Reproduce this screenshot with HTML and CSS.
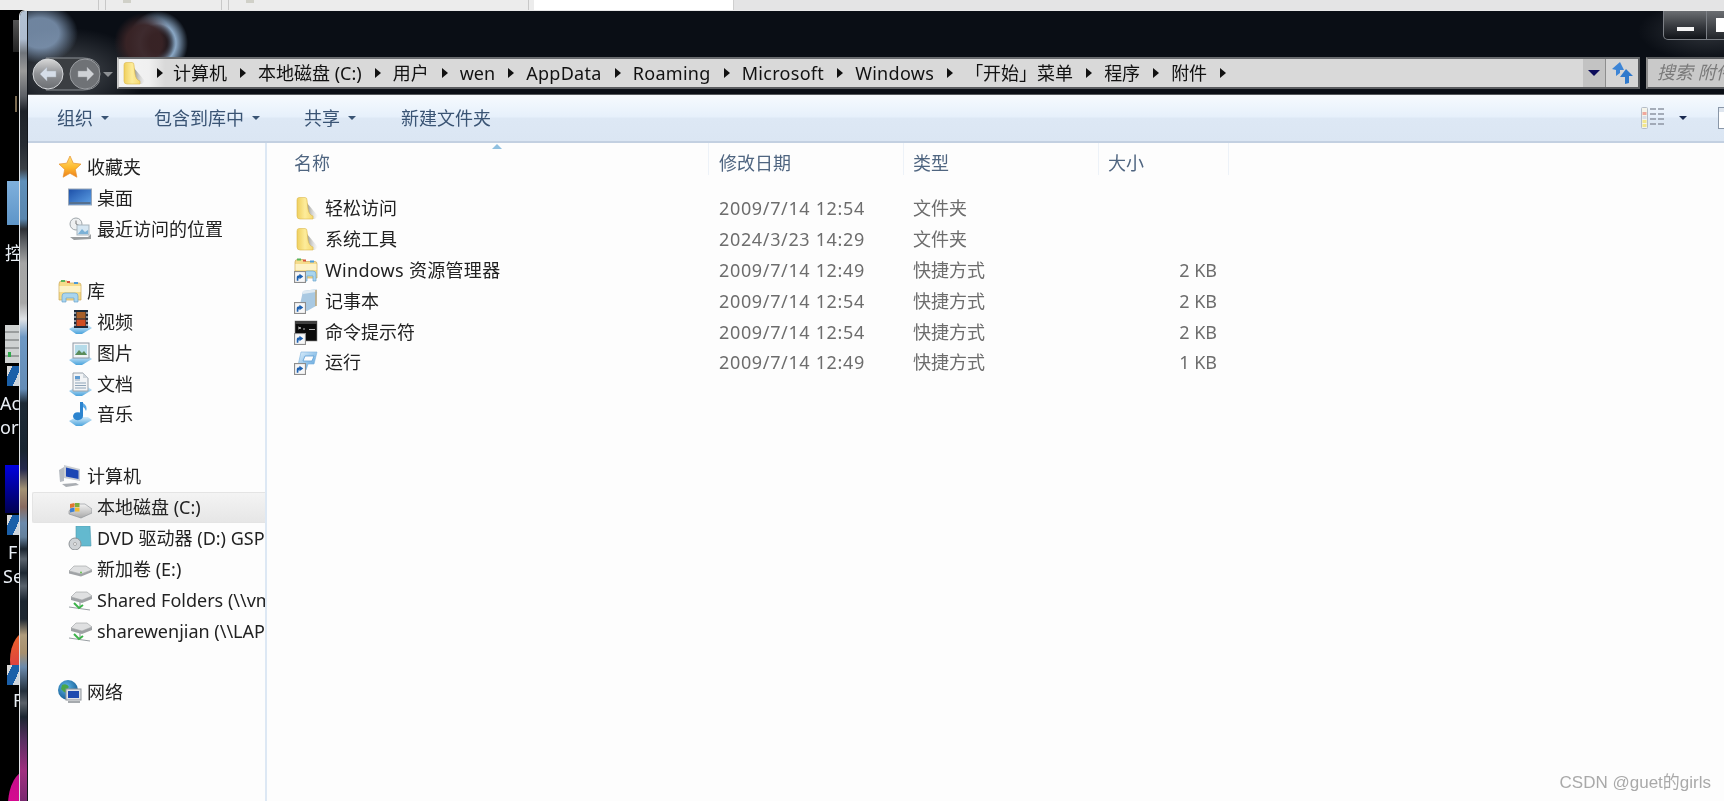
FILE: index.html
```html
<!DOCTYPE html>
<html lang="zh-CN">
<head>
<meta charset="utf-8">
<title>附件</title>
<link rel="stylesheet" href="styles.css">
</head>
<body>
<svg class="defs" width="0" height="0" aria-hidden="true">
  <defs>
    <linearGradient id="gFolder" x1="0" y1="0" x2="1" y2="0"><stop offset="0" stop-color="#efcf5e"/><stop offset=".5" stop-color="#fdec9a"/><stop offset="1" stop-color="#f6d970"/></linearGradient>
    <linearGradient id="gShadow" x1="0" y1="0" x2="1" y2="0"><stop offset="0" stop-color="#77776c" stop-opacity=".85"/><stop offset="1" stop-color="#bbb" stop-opacity="0"/></linearGradient>
    <linearGradient id="gStar" x1="0" y1="0" x2="0" y2="1"><stop offset="0" stop-color="#ffe27a"/><stop offset=".55" stop-color="#fdb92e"/><stop offset="1" stop-color="#ee7f1c"/></linearGradient>
    <linearGradient id="gDesk" x1="0" y1="0" x2="1" y2="1"><stop offset="0" stop-color="#1c4fa8"/><stop offset="1" stop-color="#5fa2e6"/></linearGradient>
    <linearGradient id="gBase" x1="0" y1="0" x2="0" y2="1"><stop offset="0" stop-color="#d4ebfa"/><stop offset="1" stop-color="#4aa3dc"/></linearGradient>
    <linearGradient id="gDrive" x1="0" y1="0" x2="0" y2="1"><stop offset="0" stop-color="#f2f2f2"/><stop offset="1" stop-color="#a9a9a9"/></linearGradient>
    <linearGradient id="gRun" x1="0" y1="0" x2="1" y2="1"><stop offset="0" stop-color="#e4f3fd"/><stop offset="1" stop-color="#4d9ad8"/></linearGradient>
    <linearGradient id="gNavBtn" x1="0" y1="0" x2="0" y2="1"><stop offset="0" stop-color="#d8d8d8"/><stop offset=".5" stop-color="#8e9094"/><stop offset="1" stop-color="#6c6f73"/></linearGradient>
    <radialGradient id="gGlobe" cx=".4" cy=".35" r=".7"><stop offset="0" stop-color="#5fb8ea"/><stop offset="1" stop-color="#11578f"/></radialGradient>

    <symbol id="i-folder" viewBox="0 0 24 24">
      <path d="M13 7 L24 20 L21 23 L12 23Z" fill="url(#gShadow)"/>
      <path d="M3 4 Q3 1.5 5 1.5 L11 1.5 Q13 1.5 13 4 L14 13 Q15 19 19 20 L19 23 L6 23 Q3 23 3 20Z" fill="url(#gFolder)" stroke="#dcb94f" stroke-width=".6"/>
    </symbol>
    <symbol id="i-star" viewBox="0 0 24 24">
      <path d="M12 1 L15.3 8.2 L23 9.1 L17.3 14.4 L18.9 22.2 L12 18.3 L5.1 22.2 L6.7 14.4 L1 9.1 L8.7 8.2Z" fill="url(#gStar)" stroke="#e6902c" stroke-width=".7"/>
    </symbol>
    <symbol id="i-desktop" viewBox="0 0 24 24">
      <rect x="0.5" y="3" width="23" height="16" fill="url(#gDesk)" stroke="#9aa7b8"/>
      <rect x="1.5" y="16" width="21" height="2" fill="#55708f"/>
    </symbol>
    <symbol id="i-recent" viewBox="0 0 24 24">
      <circle cx="8" cy="7" r="6" fill="#eef0f1" stroke="#9ea5aa"/>
      <path d="M8 3.5V7L11 8.5" fill="none" stroke="#777" stroke-width="1"/>
      <rect x="9" y="8" width="12" height="10" fill="#d5e6f2" stroke="#a7b3bc"/>
      <path d="M10 17 L14 12 L17 15 L20 13 V17Z" fill="#7cb1d6"/>
      <path d="M2 20 L20 20 L23 17 L23 22 L6 23Z" fill="#9a9d9f"/>
    </symbol>
    <symbol id="i-library" viewBox="0 0 24 24">
      <path d="M1 5 Q1 2 3.500 2 H9 L11 4 H21 Q23 4 23 6 V21 H1Z" fill="#f6dc8b" stroke="#c9a85a" stroke-width=".7"/>
      <rect x="3" y="1" width="4" height="2" fill="#5bb45b"/><rect x="9" y="2" width="3" height="2" fill="#d9503c"/><rect x="16" y="3" width="4" height="2" fill="#4d9ad8"/>
      <rect x="1.500" y="7" width="21" height="6" fill="#fdf2c6"/>
      <path d="M4 23 V17 Q4 14 7 14 H17 Q20 14 20 17 V23 H16 V19 H8 V23Z" fill="#a9d5ee" stroke="#6ba5cb" stroke-width=".7"/>
    </symbol>
    <symbol id="i-video" viewBox="0 0 24 24">
      <path d="M1 19 L8 15 H20 L24 18 L14 24 H8Z" fill="url(#gBase)"/>
      <rect x="6" y="0" width="14" height="18" fill="#1d2a3a"/>
      <rect x="8.500" y="2" width="9" height="6.500" fill="#a8602a"/><rect x="8.500" y="9.500" width="9" height="6.500" fill="#cf4d22"/>
      <path d="M7 2v2M7 6v2M7 10v2M7 14v2M19 2v2M19 6v2M19 10v2M19 14v2" stroke="#dfe6ee" stroke-width="1.200"/>
    </symbol>
    <symbol id="i-picture" viewBox="0 0 24 24">
      <path d="M1 19 L8 15 H20 L24 18 L14 24 H8Z" fill="url(#gBase)"/>
      <rect x="5" y="2" width="16" height="15" fill="#f3f5f7" stroke="#8e98a3"/>
      <rect x="7" y="4" width="12" height="10" fill="#b5dbe9"/>
      <path d="M7 14 L11 9 L14 12 L16 10 L19 14Z" fill="#5b8c5a"/>
    </symbol>
    <symbol id="i-doc" viewBox="0 0 24 24">
      <path d="M1 19 L8 15 H20 L24 18 L14 24 H8Z" fill="url(#gBase)"/>
      <path d="M5 1 H15 L20 6 V19 H5Z" fill="#f2f4f6" stroke="#9aa3ac"/>
      <path d="M15 1 V6 H20Z" fill="#cfd6dc"/>
      <path d="M7 8H12M7 11H18M7 13.500H18M7 16H18" stroke="#8ea4b8"/>
      <rect x="7" y="4" width="5" height="3" fill="#5e9bd2"/>
    </symbol>
    <symbol id="i-music" viewBox="0 0 24 24">
      <path d="M1 19 L8 15 H20 L24 18 L14 24 H8Z" fill="url(#gBase)"/>
      <path d="M15 0 V14 A5 4 0 1 1 12 10.500 V0Z" fill="#2c84cf"/>
      <path d="M15 1 Q20 4 18 9 Q17 6 15 5Z" fill="#5aa8e4"/>
    </symbol>
    <symbol id="i-computer" viewBox="0 0 24 24">
      <path d="M1 6 L6 3 V17 L2 18Z" fill="#b7bcc2"/>
      <path d="M6 1 L22 5 V17 L6 14Z" fill="#c9cdd2"/>
      <path d="M8 3.500 L20.500 6.500 V15 L8 12.500Z" fill="#1c46b4"/>
      <path d="M4 20 L18 19 L21 21 L8 23Z" fill="#a9adb2"/>
    </symbol>
    <symbol id="i-drivec" viewBox="0 0 24 24">
      <path d="M1 16 L7 9 H17 L24 14 V18 L13 23 L1 19Z" fill="url(#gDrive)" stroke="#8a8f94" stroke-width=".6"/>
      <path d="M2 9 L6.500 8 V12 L2 13Z" fill="#e2762f"/><path d="M7 8 L11.500 8 V12 L7 12Z" fill="#7dae3c"/>
      <path d="M2 13.500 L6.500 12.500 V16.500 L2 17.500Z" fill="#3f7fd0"/><path d="M7 12.500 L11.500 12.500 V16.500 L7 16.500Z" fill="#f3bb2f"/>
    </symbol>
    <symbol id="i-dvd" viewBox="0 0 24 24">
      <path d="M8 0 H22 L23 20 H8Z" fill="#63b9cf" stroke="#4f9bb0" stroke-width=".6"/>
      <circle cx="7" cy="18" r="6" fill="#cfd3d6" stroke="#8d9296"/>
      <circle cx="7" cy="18" r="1.500" fill="#f5f5f5" stroke="#777" stroke-width=".5"/>
    </symbol>
    <symbol id="i-hdd" viewBox="0 0 24 24">
      <path d="M1 14 L6 9 H18 L24 13 L13 17Z" fill="#dfe0e1" stroke="#9a9d9f" stroke-width=".6"/>
      <path d="M1 14 L13 17 L24 13 V15 L13 19.500 L1 16.500Z" fill="#a0a3a6"/>
      <circle cx="13" cy="15.500" r="1" fill="#66c04c"/>
    </symbol>
    <symbol id="i-netdrive" viewBox="0 0 24 24">
      <path d="M3 9 L8 4 H19 L24 8 L14 12Z" fill="#dfe0e1" stroke="#9a9d9f" stroke-width=".6"/>
      <path d="M3 9 L14 12 L24 8 V11 L14 15 L3 12Z" fill="#9ea1a4"/>
      <path d="M12 14 V19 M1 19 L22 22" stroke="#9aa0a4" stroke-width="1.200" fill="none"/>
      <path d="M6 15 L11 20 L15 17" stroke="#3cb34a" stroke-width="2" fill="none"/>
    </symbol>
    <symbol id="i-network" viewBox="0 0 24 24">
      <circle cx="10" cy="10" r="10" fill="url(#gGlobe)"/>
      <path d="M4 5 Q9 3 11 7 Q8 9 9 13 Q5 12 3 9Z" fill="#4aa64a"/>
      <rect x="8" y="9" width="15" height="11" fill="#dfe3e7" stroke="#8e9399"/>
      <rect x="10" y="11" width="11" height="7" fill="#1d4bb0"/>
      <rect x="10" y="21" width="12" height="2" fill="#a6aaae"/>
    </symbol>
    <symbol id="i-explorer" viewBox="0 0 24 24">
      <path d="M1 4 Q1 1.500 3.500 1.500 H9 L11 3.500 H21 Q23 3.500 23 6 V20 H1Z" fill="#f6dc8b" stroke="#c9a85a" stroke-width=".7"/>
      <rect x="3" y=".5" width="4" height="2" fill="#5bb45b"/><rect x="9" y="1.500" width="3" height="2" fill="#d9503c"/><rect x="16" y="2.500" width="4" height="2" fill="#4d9ad8"/>
      <rect x="1.500" y="6" width="21" height="6" fill="#fdf2c6"/>
      <path d="M10 23 V16 Q10 13 13 13 H19 Q22 13 22 16 V23 H19 V18 H13 V23Z" fill="#a9d5ee" stroke="#6ba5cb" stroke-width=".7"/>
    </symbol>
    <symbol id="i-notepad" viewBox="0 0 24 24">
      <path d="M9 2 L23 0 L22 17 L13 22 L5 20Z" fill="#a9c9e2"/>
      <path d="M9 2 L23 0 L22 3 L9 5Z" fill="#dfeaf2"/>
      <path d="M22 1 L22 17" stroke="#bfa679" stroke-width="1.500"/>
    </symbol>
    <symbol id="i-cmd" viewBox="0 0 24 24">
      <rect x="1" y="1" width="22" height="20" fill="#0a0a0a" stroke="#8a8a8a" stroke-width=".6"/>
      <rect x="1" y="1" width="22" height="3" fill="#3f3f3f"/>
      <path d="M4 7 L7 8 L4 9M9 9H11M15 9.500H21" stroke="#dcdcdc" stroke-width=".8" fill="none"/>
    </symbol>
    <symbol id="i-run" viewBox="0 0 24 24">
      <path d="M7 2 H23 L20 14 H14 L12 20 H3Z" fill="url(#gRun)" stroke="#79b0dc" stroke-width=".6"/>
      <path d="M11 6 H20 L18 11 H9Z" fill="#fdfdfd" stroke="#5a9dd4" stroke-width=".8"/>
    </symbol>
    <symbol id="i-badge" viewBox="0 0 11 11">
      <rect x=".5" y=".5" width="10" height="10" fill="#f7f7f7" stroke="#8d8d8d"/>
      <path d="M2.500 9 V6 Q2.500 4 5 4 V2.500 L8.500 5 L5 7.500 V6 Q4 6 4 9Z" fill="#1b5fb0"/>
    </symbol>
  </defs>
</svg>

<div class="screen">
  <div class="tabs">
    <div class="tab tab-a"></div>
    <div class="tab tab-b"><span class="tab-ico"></span></div>
    <div class="tab tab-c"><span class="tab-ico"></span></div>
    <div class="tab tab-on"></div>
    <div class="tab-rest"></div>
  </div>

  <div class="stage">
    <div class="desk">
      <span class="dk dk-tick"></span>
      <span class="dk dk-bar"></span>
      <span class="dk dk-tile"></span>
      <span class="dk dk-label dk-l1">控</span>
      <span class="dk dk-server"><i></i></span>
      <span class="dk dk-short dk-s1"></span>
      <span class="dk dk-label dk-l2">Ac</span>
      <span class="dk dk-label dk-l3">ort</span>
      <span class="dk dk-navy"></span>
      <span class="dk dk-short dk-s2"></span>
      <span class="dk dk-label dk-l4">F</span>
      <span class="dk dk-label dk-l5">Se</span>
      <span class="dk dk-orange"></span>
      <span class="dk dk-short dk-s3"></span>
      <span class="dk dk-label dk-l6">F</span>
      <span class="dk dk-pink"></span>
    </div>

    <div class="window">
      <div class="glass-left"></div>
      <div class="win-main">
        <div class="nav">
          <div class="nav-btns">
            <svg class="nav-svg" width="88" height="40" viewBox="0 0 88 40">
              <path d="M17 4 H54 Q66 4 70 12 V28 Q66 36 54 36 H17Z" fill="#3b3e42" stroke="#8b8f94" stroke-width="1"/>
              <circle cx="19" cy="20" r="15" fill="url(#gNavBtn)" stroke="#d5d7da"/>
              <circle cx="56" cy="20" r="15" fill="#6f7276" stroke="#9b9ea2"/>
              <path d="M11 20 L18 13 V17 H27 V23 H18 V27Z" fill="#d5dde8" stroke="#a9b1bb" stroke-width=".5"/>
              <path d="M65 20 L58 13 V17 H49 V23 H58 V27Z" fill="#cfd2d6" stroke="#9a9da2" stroke-width=".5"/>
              <path d="M74 18 H84 L79 23Z" fill="#8d9094"/>
            </svg>
          </div>
          <div class="address">
            <svg class="addr-folder"><use href="#i-folder"/></svg>
            <div class="crumbs">
              <span class="sep"></span><span>计算机</span>
              <span class="sep"></span><span>本地磁盘 (C:)</span>
              <span class="sep"></span><span>用户</span>
              <span class="sep"></span><span>wen</span>
              <span class="sep"></span><span class="wide">AppData</span>
              <span class="sep"></span><span class="wide">Roaming</span>
              <span class="sep"></span><span class="wide">Microsoft</span>
              <span class="sep"></span><span class="wide">Windows</span>
              <span class="sep"></span><span>「开始」菜单</span>
              <span class="sep"></span><span>程序</span>
              <span class="sep"></span><span>附件</span>
              <span class="sep"></span>
            </div>
            <div class="addr-drop"><span class="drop-tri"></span></div>
            <div class="addr-refresh">
              <svg width="22" height="22" viewBox="0 0 22 22">
                <path d="M9 0 L1 7 L5 8 L5 14 L9 11 L9 8 L13 8Z" fill="#3d85d6"/>
                <path d="M15 7 L22 14 L18 14 L18 21 L14 22 L14 15 L9 15Z" fill="#2f79cc"/>
              </svg>
            </div>
          </div>
          <div class="search"><span>搜索 附件</span></div>
        </div>

        <div class="toolbar">
          <div class="tool tool-a">组织<span class="tool-tri"></span></div>
          <div class="tool tool-b">包含到库中<span class="tool-tri"></span></div>
          <div class="tool tool-c">共享<span class="tool-tri"></span></div>
          <div class="tool">新建文件夹</div>
          <div class="tool-right">
            <svg class="views" width="24" height="22" viewBox="0 0 24 22">
              <rect x=".5" y=".5" width="6" height="21" rx="1" fill="#f4f4ea" stroke="#b5bcc6"/>
              <rect x="1.500" y="5" width="4" height="3" fill="#f0a89c"/><rect x="1.500" y="9" width="4" height="3" fill="#d6deea"/><rect x="1.500" y="13" width="4" height="3" fill="#f2e68c"/><rect x="1.500" y="17" width="4" height="3" fill="#f2e68c"/>
              <path d="M9 2H15M17 2H23M9 7H15M17 7H23M9 12H15M17 12H23M9 17H15M17 17H23" stroke="#8d95a2" stroke-width="1.500"/>
            </svg>
            <span class="tool-tri dark"></span>
            <span class="pane-ico"></span>
          </div>
        </div>

        <div class="content">
          <aside class="side">
            <div class="row group"><svg class="ico"><use href="#i-star"/></svg><span>收藏夹</span></div>
            <div class="row"><svg class="ico"><use href="#i-desktop"/></svg><span>桌面</span></div>
            <div class="row"><svg class="ico"><use href="#i-recent"/></svg><span>最近访问的位置</span></div>
            <div class="row spacer"></div>
            <div class="row group"><svg class="ico"><use href="#i-library"/></svg><span>库</span></div>
            <div class="row"><svg class="ico"><use href="#i-video"/></svg><span>视频</span></div>
            <div class="row"><svg class="ico"><use href="#i-picture"/></svg><span>图片</span></div>
            <div class="row"><svg class="ico"><use href="#i-doc"/></svg><span>文档</span></div>
            <div class="row"><svg class="ico"><use href="#i-music"/></svg><span>音乐</span></div>
            <div class="row spacer"></div>
            <div class="row group"><svg class="ico"><use href="#i-computer"/></svg><span>计算机</span></div>
            <div class="row selected"><svg class="ico"><use href="#i-drivec"/></svg><span>本地磁盘 (C:)</span></div>
            <div class="row"><svg class="ico"><use href="#i-dvd"/></svg><span>DVD 驱动器 (D:) GSP1RMCPRXFREO_ZH-CN_DV5</span></div>
            <div class="row"><svg class="ico"><use href="#i-hdd"/></svg><span>新加卷 (E:)</span></div>
            <div class="row"><svg class="ico"><use href="#i-netdrive"/></svg><span>Shared Folders (\\vmware-host)</span></div>
            <div class="row"><svg class="ico"><use href="#i-netdrive"/></svg><span>sharewenjian (\\LAPTOP)</span></div>
            <div class="row spacer"></div>
            <div class="row group"><svg class="ico"><use href="#i-network"/></svg><span>网络</span></div>
          </aside>

          <main class="files">
            <span class="sort-tri"></span>
            <div class="cols head">
              <div>名称</div><div>修改日期</div><div>类型</div><div>大小</div>
            </div>
            <div class="cols item">
              <div class="name"><svg class="ico"><use href="#i-folder"/></svg><span>轻松访问</span></div>
              <div class="date">2009/7/14 12:54</div><div>文件夹</div><div class="size"></div>
            </div>
            <div class="cols item">
              <div class="name"><svg class="ico"><use href="#i-folder"/></svg><span>系统工具</span></div>
              <div class="date">2024/3/23 14:29</div><div>文件夹</div><div class="size"></div>
            </div>
            <div class="cols item">
              <div class="name"><span class="ico-wrap"><svg class="ico"><use href="#i-explorer"/></svg><svg class="badge"><use href="#i-badge"/></svg></span><span class="wide">Windows 资源管理器</span></div>
              <div class="date">2009/7/14 12:49</div><div>快捷方式</div><div class="size">2 KB</div>
            </div>
            <div class="cols item">
              <div class="name"><span class="ico-wrap"><svg class="ico"><use href="#i-notepad"/></svg><svg class="badge"><use href="#i-badge"/></svg></span><span>记事本</span></div>
              <div class="date">2009/7/14 12:54</div><div>快捷方式</div><div class="size">2 KB</div>
            </div>
            <div class="cols item">
              <div class="name"><span class="ico-wrap"><svg class="ico"><use href="#i-cmd"/></svg><svg class="badge"><use href="#i-badge"/></svg></span><span>命令提示符</span></div>
              <div class="date">2009/7/14 12:54</div><div>快捷方式</div><div class="size">2 KB</div>
            </div>
            <div class="cols item">
              <div class="name"><span class="ico-wrap"><svg class="ico"><use href="#i-run"/></svg><svg class="badge"><use href="#i-badge"/></svg></span><span>运行</span></div>
              <div class="date">2009/7/14 12:49</div><div>快捷方式</div><div class="size">1 KB</div>
            </div>
            <div class="watermark">CSDN @guet的girls</div>
          </main>
        </div>
      </div>

      <div class="caption">
        <span class="cap-min"><i></i></span>
        <span class="cap-max"><i></i></span>
      </div>
    </div>
  </div>
</div>
</body>
</html>
```

FILE: styles.css
```css
* { box-sizing: border-box; }
html, body { margin: 0; height: 100%; overflow: hidden; background: #000; }
body { font-family: "Noto Sans", "Noto Sans CJK SC", sans-serif; font-size: 18px; color: #1c1c1c; }
.defs { position: absolute; }

.screen { width: 1724px; height: 801px; display: flex; flex-direction: column; filter: blur(.35px); }

/* browser tab strip above the captured window */
.tabs { height: 10px; flex: none; display: flex; background: #ececec; }
.tab { border-right: 1px solid #c8c8c8; position: relative; }
.tab-a { width: 99px; }
.tab-b { width: 117px; margin-left: 6px; border-left: 1px solid #c8c8c8; padding-left: 17px; }
.tab-c { width: 301px; margin-left: 6px; border-left: 1px solid #c8c8c8; padding-left: 17px; }
.tab-ico { display: block; width: 8px; height: 3px; background: #d0d0c8; }
.tab-on { width: 200px; margin-left: 5px; background: #fff; border-right: 1px solid #cfcfcf; }
.tab-rest { flex: 1; background: #e4e4e5; }

.stage { flex: 1; display: flex; min-height: 0; background: #000; }

/* desktop peeking out at the left */
.desk { width: 19px; flex: none; position: relative; overflow: hidden; background: #000; color: #e8eef4; }
.dk { position: absolute; display: block; }
.dk-label { font-size: 18px; line-height: 24px; white-space: nowrap; color: #e9eef5; }
.dk-tick { left: 13px; top: 10px; width: 6px; height: 32px; background: linear-gradient(#555, #222); }
.dk-bar { left: 15px; top: 86px; width: 2px; height: 16px; background: #7a6a50; }
.dk-tile { left: 7px; top: 171px; width: 12px; height: 44px; background: linear-gradient(#7fb0dc, #5e95c8); }
.dk-l1 { left: 5px; top: 231px; }
.dk-server { left: 5px; top: 315px; width: 14px; height: 38px; background: repeating-linear-gradient(#cfd2d2 0 6px, #9a9d9d 6px 8px); }
.dk-server i { position: absolute; left: 3px; top: 27px; width: 3px; height: 5px; background: #2fa84a; }
.dk-short { left: 7px; width: 12px; height: 20px; background: linear-gradient(115deg, #d8d8d8 0 25%, #1a5fa8 25% 70%, #cfd6dd 70%); }
.dk-s1 { top: 356px; }
.dk-l2 { left: 0; top: 381px; }
.dk-l3 { left: 0; top: 405px; }
.dk-navy { left: 5px; top: 455px; width: 14px; height: 48px; background: linear-gradient(#0000e0, #000050); }
.dk-s2 { top: 505px; }
.dk-l4 { left: 8px; top: 530px; }
.dk-l5 { left: 3px; top: 554px; }
.dk-orange { left: 10px; top: 620px; width: 40px; height: 60px; border-radius: 50%; background: linear-gradient(160deg, #ec6a24, #d8324a 70%, #a8206a); }
.dk-s3 { top: 655px; }
.dk-l6 { left: 13px; top: 678px; }
.dk-pink { left: 8px; top: 760px; width: 40px; height: 70px; border-radius: 50%; background: linear-gradient(#c01088, #f0009a); }

/* window */
.window { flex: 1; position: relative; display: flex; min-width: 0; border-top: 1px solid #e8e8e8; border-left: 1px solid #dfe3e6; border-top-left-radius: 6px; overflow: hidden;
  background: #0a0e15; }
.glass-left { width: 8px; flex: none; border-right: 1px solid #12161c;
  background: linear-gradient(#b3c2d4 0, #aebccf 28px, #70757b 42px, #9a9a9a 60px, #5c6066 85px, #1d2229 100px, #262b32 135px, #3b4046 158px, #5f90ba 170px, #5a86ae 208px, #2d3035 218px, #616468 232px, #a5a5a5 252px, #a8a8a8 292px, #dfe2e6 308px, #6d98c4 326px, #648cb6 378px, #1e2a36 392px, #182430 440px, #24284c 458px, #a39274 478px, #886a60 496px, #6b8aac 512px, #64809c 526px, #1b2530 538px, #59626c 548px, #1e2833 562px, #59626c 575px, #1b2530 590px, #1d2630 608px, #b09c7c 624px, #a8906e 642px, #6b8aac 656px, #24303c 680px, #5a6068 692px, #1b2530 706px, #5a2f62 730px, #a03080 760px, #7a2a70 790px); }
.win-main { flex: 1; display: flex; flex-direction: column; min-width: 0; }

.nav { height: 83px; flex: none; padding: 46px 0 5px 0; display: flex; align-items: stretch;
  background:
    radial-gradient(ellipse 30px 30px at 116px 32px, rgba(58,36,38,.95) 60%, rgba(58,36,38,0) 100%),
    radial-gradient(ellipse 30px 32px at 130px 32px, rgba(170,205,240,0) 30%, rgba(170,205,240,.8) 60%, rgba(170,205,240,0) 100%),
    radial-gradient(ellipse 38px 30px at 12px 22px, rgba(150,178,212,.72) 50%, rgba(150,178,212,0) 100%),
    radial-gradient(ellipse 80px 45px at 40px 62px, rgba(120,125,130,.55), rgba(120,125,130,0) 100%),
    radial-gradient(ellipse 70px 30px at 1680px 20px, rgba(120,125,130,.35), rgba(120,125,130,0) 100%),
    #0a0e15; }
.nav-btns { width: 89px; flex: none; margin: -3px 0 -2px 0; }
.nav-svg { display: block; margin-left: 1px; }
.address { width: 1523px; flex: none; display: flex; align-items: center; border: 2px solid #5a5c5f; border-top-color: #6a6c6f; border-left-color: #c8c8c8; background: linear-gradient(90deg, #f4f4f4 0, #f0f0f0 30px, #d9d9d9 46px, #d9d9d9 100%); }
.addr-folder { width: 24px; height: 24px; flex: none; margin-left: 2px; }
.crumbs { flex: 1; display: flex; align-items: center; white-space: nowrap; color: #111; line-height: 24px; min-width: 0; padding-left: 12px; }
.sep { width: 0; height: 0; flex: none; border-left: 6px solid #111; border-top: 5px solid transparent; border-bottom: 5px solid transparent; margin: 0 12px 0 13px; }
.crumbs .sep:first-child { margin-left: 0; margin-right: 10px; }
.wide { letter-spacing: .3px; }
.addr-drop { width: 23px; align-self: stretch; flex: none; background: #c3c3c3; display: flex; align-items: center; justify-content: center; border-right: 1px solid #8e8e8e; }
.drop-tri { width: 0; height: 0; border-top: 6px solid #0c0c5a; border-left: 6px solid transparent; border-right: 6px solid transparent; }
.addr-refresh { width: 32px; align-self: stretch; flex: none; background: #d5d5d5; display: flex; align-items: center; justify-content: center; }
.search { flex: 1; margin-left: 6px; border: 2px solid #5a5c5f; border-right: 0; border-left-color: #8c8c8c; background: #c9c9c9; color: #7a7a7a; font-style: italic; font-size: 18px; line-height: 26px; padding-left: 9px; white-space: nowrap; overflow: hidden; }

.toolbar { height: 49px; flex: none; display: flex; align-items: center; padding-left: 29px; color: #3a5474; border-top: 1px solid #55585c; border-bottom: 2px solid #c3d0e1;
  background: linear-gradient(#f6fafe 0, #e6f0fb 22px, #dde8f5 23px, #dbe6f3 100%); line-height: 24px; }
.tool { display: flex; align-items: center; white-space: nowrap; }
.tool-a { width: 97px; }
.tool-b { width: 150px; }
.tool-c { width: 97px; }
.tool-tri { width: 0; height: 0; margin-left: 8px; border-top: 4px solid #3a5474; border-left: 4px solid transparent; border-right: 4px solid transparent; }
.tool-tri.dark { border-top-color: #1a2a50; margin-left: 14px; }
.tool-right { margin-left: auto; display: flex; align-items: center; }
.views { display: block; }
.pane-ico { width: 6px; height: 22px; margin-left: 31px; border: 1px solid #8a97a8; border-right: 0; background: linear-gradient(#dfe6ef 0 4px, #fff 4px); }

.content { flex: 1; display: flex; min-height: 0; background: #fdfdfd; }
.side { width: 239px; flex: none; padding: 9px 0 0 0; border-right: 2px solid #dde8f4; overflow: hidden; }
.row { height: 30.88px; display: flex; align-items: center; gap: 5px; padding-left: 40px; white-space: nowrap; overflow: hidden; color: #222; line-height: 24px; }
.row.group { padding-left: 30px; }
.row.selected { margin-left: 4px; padding-left: 35px; background: linear-gradient(#f4f4f4, #e6e6e6); border: 1px solid #e4e4e4; border-right: 0; border-radius: 2px 0 0 2px; }
.ico { width: 24px; height: 24px; flex: none; display: block; }

.files { flex: 1; position: relative; min-width: 0; }
.sort-tri { position: absolute; left: 225px; top: 1px; width: 0; height: 0; border-bottom: 5px solid #8fc0e0; border-left: 5px solid transparent; border-right: 5px solid transparent; }
.cols { display: grid; grid-template-columns: 442px 195px 195px 130px; }
.cols > div:nth-child(n+3) { padding-left: 9px; }
.head { height: 38px; padding-top: 6px; color: #4f6580; line-height: 28px; margin-bottom: 12px; }
.head > div { padding-left: 10px; height: 32px; border-right: 1px solid #edf2f8; margin-top: -6px; padding-top: 6px; }
.head > div:first-child { padding-left: 27px; }
.item { height: 30.8px; align-items: center; color: #6d6d6d; line-height: 24px; white-space: nowrap; }
.item > div { padding-left: 10px; }
.item > .date { letter-spacing: .65px; }
.item > .name { padding-left: 27px; display: flex; align-items: center; gap: 7px; color: #222; }
.item > .size { text-align: right; padding: 0 12px 0 0; }
.ico-wrap { position: relative; width: 24px; height: 24px; flex: none; display: block; }
.badge { position: absolute; left: 0; bottom: -1px; width: 12px; height: 12px; }

.watermark { position: absolute; right: 13px; bottom: 7px; font-size: 17px; line-height: 22px; color: #a9a9a9; font-family: "Liberation Sans", "Noto Sans CJK SC", sans-serif; white-space: nowrap; }

.caption { position: absolute; left: 1643px; top: 0; display: flex; height: 29px; }
.cap-min { width: 44px; display: flex; align-items: flex-end; justify-content: center; padding-bottom: 8px; border: 1px solid #7c8086; border-top: 0; border-radius: 0 0 0 5px; background: linear-gradient(#6b6e72, #3a3d42 50%, #101318); }
.cap-min i { display: block; width: 17px; height: 4px; background: #f4f4f4; }
.cap-max { width: 18px; padding: 7px 0 0 9px; border-bottom: 1px solid #7c8086; background: linear-gradient(#6b6e72, #22252a); }
.cap-max i { display: block; width: 12px; height: 14px; background: #fff; border: 3px solid #fff; border-right: 0; background-clip: padding-box; }
```
